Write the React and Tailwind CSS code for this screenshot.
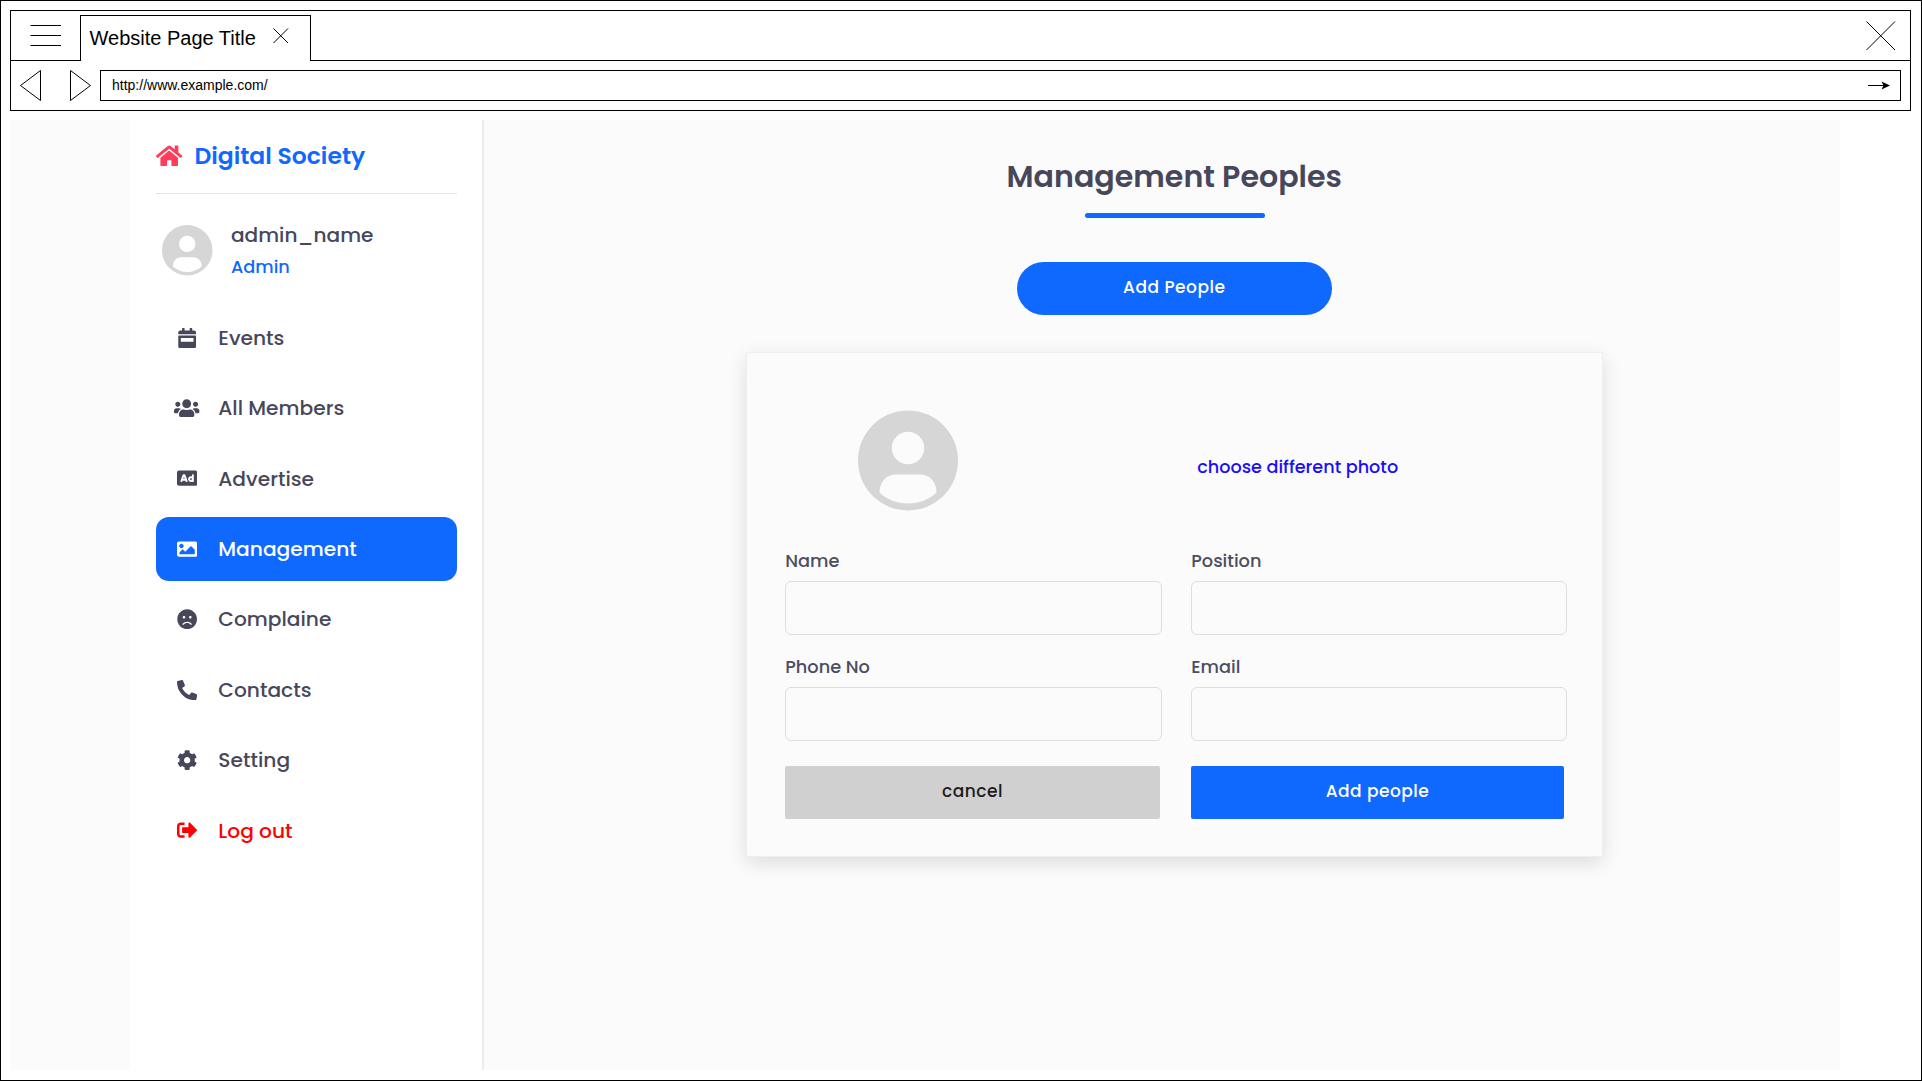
import React from "react";
import {
  FaAd,
  FaCog,
  FaFrown,
  FaHome,
  FaImage,
  FaPhoneAlt,
  FaSignOutAlt,
  FaUsers,
} from "react-icons/fa";

function CalendarIcon({ className }) {
  return (
    <svg viewBox="0 0 448 512" fill="currentColor" fillRule="evenodd" className={className}>
      <path d="M12 192h424c6.6 0 12 5.4 12 12v260c0 26.5-21.5 48-48 48H48c-26.5 0-48-21.5-48-48V204c0-6.6 5.4-12 12-12zm436-44v-36c0-26.5-21.5-48-48-48h-48V12c0-6.6-5.4-12-12-12h-40c-6.6 0-12 5.4-12 12v52H160V12c0-6.6-5.4-12-12-12h-40c-6.6 0-12 5.4-12 12v52H48C21.5 64 0 85.5 0 112v36c0 6.6 5.4 12 12 12h424c6.6 0 12-5.4 12-12zM64 252v96h320v-96z" />
    </svg>
  );
}

function Avatar({ className, bg }) {
  return (
    <svg viewBox="0 0 100 100" className={className}>
      <circle cx="50" cy="50" r="50" fill="#d6d6d6" />
      <circle cx="50" cy="37.5" r="16.2" fill={bg} />
      <path d="M21.5 82C21.5 72 28 64 38 64H62C72 64 78.5 72 78.5 82C71 89 61 93 50 93S29 89 21.5 82Z" fill={bg} />
    </svg>
  );
}

const nav = [
  { label: "Events", Icon: CalendarIcon },
  { label: "All Members", Icon: FaUsers, wide: true },
  { label: "Advertise", Icon: FaAd },
  { label: "Management", Icon: FaImage, active: true },
  { label: "Complaine", Icon: FaFrown },
  { label: "Contacts", Icon: FaPhoneAlt },
  { label: "Setting", Icon: FaCog },
  { label: "Log out", Icon: FaSignOutAlt, danger: true },
];

function BrowserBar() {
  return (
    <header className="h-[101px] shrink-0 border border-black font-['Liberation_Sans',sans-serif] text-black">
      <div className="flex h-[50px] items-end">
        <div className="h-full w-[69px] border-b border-black pt-[14px] pl-[19px]">
          <svg width="31" height="21" viewBox="0 0 31 21" stroke="black">
            <path d="M0.5 0.5H31M0.5 10.5H31M0.5 20.5H31" />
          </svg>
        </div>
        <div className="flex h-[46px] w-[231px] items-start border-x border-t border-black pl-[8.5px]">
          <span className="mt-[7px] w-[166.5px] text-[20px] leading-[30px] whitespace-nowrap">Website Page Title</span>
          <svg className="mt-[12px] ml-[17px]" width="16" height="16" viewBox="0 0 16 16" stroke="black">
            <path d="M0.5 0.5L15 15M15 0.5L0.5 15" />
          </svg>
        </div>
        <div className="flex h-full flex-1 justify-end border-b border-black pt-[10px] pr-[14px]">
          <svg width="30" height="30" viewBox="0 0 30 30" stroke="black">
            <path d="M0.5 0.5L29 29M29 0.5L0.5 29" />
          </svg>
        </div>
      </div>
      <div className="flex pt-[9px] pr-[9px] pl-[9px]">
        <svg width="22" height="31" viewBox="0 0 22 31" fill="none" stroke="black">
          <path d="M20.5 0.5V30.5L0.5 15.5Z" />
        </svg>
        <svg className="ml-[28px]" width="22" height="31" viewBox="0 0 22 31" fill="none" stroke="black">
          <path d="M0.5 0.5V30.5L20.5 15.5Z" />
        </svg>
        <div className="ml-[8px] flex h-[31px] flex-1 items-center justify-between border border-black pr-[10px] pl-[11px] text-[14px]">
          <span>http://www.example.com/</span>
          <svg width="22" height="9" viewBox="0 0 22 9">
            <path d="M0 4.5H16" stroke="black" />
            <path d="M13.5 0.5L22 4.5L13.5 8.5L15.5 4.5Z" fill="black" />
          </svg>
        </div>
      </div>
    </header>
  );
}

function NavItem({ label, Icon, wide, active, danger }) {
  const tone = active
    ? "bg-[#0f69ff] text-white"
    : danger
      ? "text-[#ff0000]"
      : "text-[#47475b]";
  return (
    <a className={`flex h-[64px] items-center rounded-[13px] pl-[18px] text-[20.2px] ${tone}`}>
      <span className="flex w-[26px] justify-center">
        <Icon className={wide ? "h-[20.3px] w-[25.4px]" : "h-[20.3px] w-[20.3px]"} />
      </span>
      <span className="ml-[18.3px] pt-[0.5px]">{label}</span>
    </a>
  );
}

function Sidebar() {
  return (
    <aside className="w-[354px] shrink-0 border-r-2 border-[#ececec] bg-white pr-[25px] pl-[26px]">
      <div className="flex h-[71px] items-center">
        <FaHome className="h-[23.5px] w-[26.4px] text-[#ff3d5c]" />
        <span className="ml-[12px] text-[23.5px] font-semibold text-[#0f69ff]">Digital Society</span>
      </div>
      <div className="mt-[2px] h-px bg-[#e3e3e3]" />
      <div className="mt-[25px] flex h-[64px] pl-[6px]">
        <Avatar className="mt-[6px] h-[50.5px] w-[50.5px]" bg="#ffffff" />
        <div className="ml-[18.5px]">
          <div className="text-[20.1px] leading-[32px] text-[#47475b]">admin_name</div>
          <div className="text-[17.7px] leading-[32px] text-[#0f69ff]">Admin</div>
        </div>
      </div>
      <nav className="mt-[22.8px] flex flex-col gap-[6.4px]">
        {nav.map((item) => (
          <NavItem key={item.label} {...item} />
        ))}
      </nav>
    </aside>
  );
}

function Field({ label }) {
  return (
    <label className="block text-[17.75px] leading-[24px] text-[#4d4d61]">
      <span>{label}</span>
      <input className="mt-[8px] block h-[54px] w-full rounded-[6px] border-[1.3px] border-[#dedede] bg-transparent px-4 outline-none" />
    </label>
  );
}

function PersonForm() {
  return (
    <section className="mt-[37px] h-[505px] w-[857px] border-[1.5px] border-[#efefef] bg-[#fbfbfb] pt-[57px] pr-[34.5px] pl-[38.5px] shadow-[0_6px_18px_rgba(0,0,0,0.12)]">
      <div className="flex h-[101px]">
        <Avatar className="ml-[73px] h-[101px] w-[100px]" bg="#fbfbfb" />
        <span className="mt-[44.5px] ml-[239px] text-[17.6px] leading-[24px] whitespace-nowrap text-[#1a0dff]">
          choose different photo
        </span>
      </div>
      <div className="mt-[38px] grid grid-cols-[377px_376px] gap-x-[29px] gap-y-[20px]">
        <Field label="Name" />
        <Field label="Position" />
        <Field label="Phone No" />
        <Field label="Email" />
      </div>
      <div className="mt-[25px] flex gap-[31px] text-[17px] tracking-[0.5px]">
        <button className="h-[52.5px] w-[374.5px] rounded-[2px] bg-[#d0d0d0] pb-px text-[#1c1c1c]">cancel</button>
        <button className="h-[52.5px] w-[373.5px] rounded-[2px] bg-[#0f69ff] pb-px text-white">Add people</button>
      </div>
    </section>
  );
}

export default function App() {
  return (
    <div className="flex h-[1081px] w-[1922px] flex-col overflow-hidden border border-black bg-white pt-[9px] pr-[10px] pb-[10px] pl-[9px]">
      <BrowserBar />
      <div className="mt-[9px] flex w-[1829.5px] flex-1 bg-[#fbfbfb] pl-[120px] font-['Poppins','Inter',sans-serif] font-medium">
        <Sidebar />
        <main className="flex flex-1 flex-col items-center pt-[34px] pl-[25px]">
          <h1 className="text-[30.1px] leading-[46px] font-semibold text-[#47475b]">Management Peoples</h1>
          <div className="mt-[13px] ml-px h-[5px] w-[180px] rounded-full bg-[#0f69ff]" />
          <button className="mt-[44px] h-[53px] w-[314.5px] rounded-[27px] bg-[#0f69ff] pb-px text-[17px] tracking-[0.5px] text-white">
            Add People
          </button>
          <PersonForm />
        </main>
      </div>
    </div>
  );
}
